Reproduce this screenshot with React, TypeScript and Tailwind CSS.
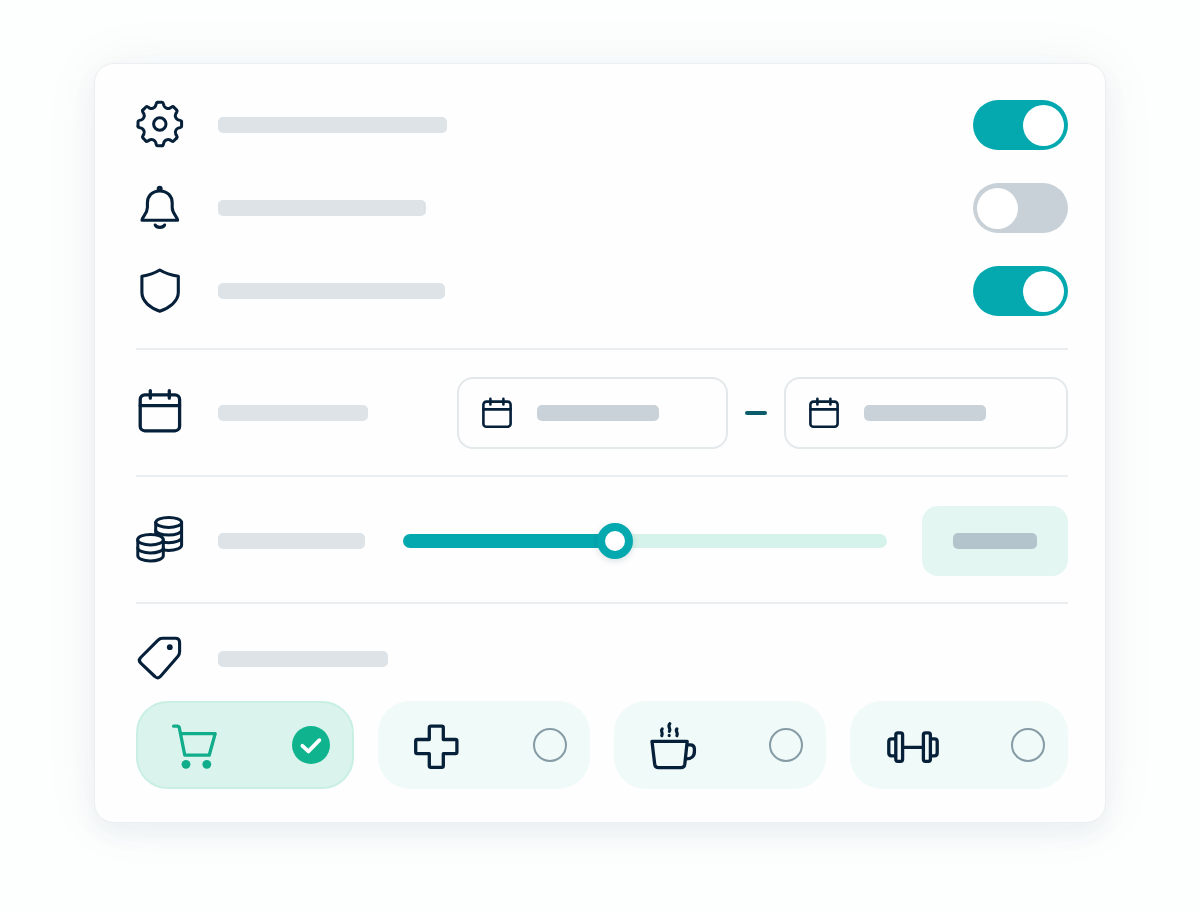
import { useState, type CSSProperties, type ReactNode } from "react";
import { clsx } from "clsx";

type IconProps = { color?: string; children: ReactNode; size?: number };

function Icon({ color = "text-[#06203a]", children, size = 48 }: IconProps) {
  return (
    <svg
      viewBox={`0 0 ${size} ${size}`}
      className={clsx("shrink-0 overflow-visible", size === 32 ? "size-8" : "size-12", color)}
      fill="none"
      stroke="currentColor"
      strokeWidth={3.3}
      strokeLinecap="round"
      strokeLinejoin="round"
      aria-hidden="true"
    >
      {children}
    </svg>
  );
}

const gearTurns = [0, 45, 90, 135, 180, 225, 270, 315];

function GearIcon() {
  return (
    <Icon>
      <g transform="translate(23.8 23)" strokeWidth={3}>
        {gearTurns.map((turn) => (
          <path
            key={turn}
            transform={`rotate(${turn})`}
            d="M-2.2-21.8H2.2Q3.3-21.8 3.6-20.4L4.1-18.4C4.8-16.2 7.9-14.9 10.1-15.9L11.9-17Q13.1-17.8 13.9-17"
          />
        ))}
        <circle r="6.2" />
      </g>
    </Icon>
  );
}

function BellIcon() {
  return (
    <Icon>
      <circle cx="23.7" cy="4.8" r="1.6" strokeWidth={2.8} />
      <path
        strokeWidth={3.1}
        d="M23.7 7C16 7 11.4 12.2 11.4 19V23.5C11.4 29.5 6.6 32 6 36.2H41.6C41 32 36.2 29.5 36.2 23.5V19C36.2 12.2 31.5 7 23.7 7Z"
      />
      <path strokeWidth={3.1} d="M19.2 41C20.8 44.1 27 44.1 28.6 41" />
    </Icon>
  );
}

function ShieldIcon() {
  return (
    <Icon>
      <path
        strokeWidth={3.1}
        d="M23.8 3C29 6.2 35 8.2 42.3 9.2V25.6C42.3 34.5 33 41 23.8 44.2C14.6 41 5.9 34.5 5.9 25.6V9.2C12.6 8.2 18.6 6.2 23.8 3Z"
      />
    </Icon>
  );
}

function CalendarIcon() {
  return (
    <Icon>
      <rect x="4.2" y="5.8" width="39.4" height="36" rx="4.6" />
      <path d="M4.2 16.6H43.6M14.3 1.6V9.2M33.3 1.6V9.2" />
    </Icon>
  );
}

function SmallCalendarIcon() {
  return (
    <Icon size={32}>
      <g strokeWidth={2.6}>
        <rect x="2.4" y="4.6" width="27.2" height="25.2" rx="3" />
        <path d="M2.4 12.4H29.6M9.4 1.8V7.4M22.4 1.8V7.4" />
      </g>
    </Icon>
  );
}

function CoinsIcon() {
  return (
    <Icon>
      <g strokeWidth={3} fill="#fefefe">
        <path d="M19.7 5.3V28.3C19.7 31.1 25.5 33.4 32.7 33.4S45.6 31.1 45.6 28.3V5.3" />
        <path d="M19.7 20.6C19.7 23.4 25.5 25.7 32.7 25.7S45.6 23.4 45.6 20.6" />
        <path d="M19.7 13C19.7 15.8 25.5 18.1 32.7 18.1S45.6 15.8 45.6 13" />
        <ellipse cx="32.7" cy="5.4" rx="12.9" ry="5" />
        <path d="M1.8 22.7V38.8C1.8 41.7 7.3 44 14.4 44S27.3 41.7 27.3 38.8V22.7" />
        <path d="M1.8 30.8C1.8 33.7 7.3 36 14.4 36S27.3 33.7 27.3 30.8" />
        <ellipse cx="14.5" cy="22.7" rx="12.8" ry="5.3" />
      </g>
    </Icon>
  );
}

function TagIcon() {
  return (
    <Icon>
      <path
        strokeWidth={3.1}
        d="M26.4 3.3H39.4C42.2 3.3 43.6 4.8 43.6 7.5V16.8C43.6 18.6 43.2 19.8 42 21.2L24.6 41.2C22.8 43.3 20.8 43.4 18.9 41.5L4.8 28.2C2.9 26.4 2.9 24.4 4.7 22.5L21.8 5.3C23.2 3.9 24.5 3.3 26.4 3.3Z"
      />
      <circle cx="33.8" cy="12.2" r="2.9" fill="currentColor" stroke="none" />
    </Icon>
  );
}

function CartIcon() {
  return (
    <Icon color="text-[#10ad8b]">
      <path d="M3.6 5.2H7.2C8.4 5.2 9 5.7 9.3 6.8L14.8 34.2H39.2L45.2 12.6H11" />
      <circle cx="16" cy="43.3" r="4.4" fill="currentColor" stroke="none" />
      <circle cx="36.8" cy="43.3" r="4.4" fill="currentColor" stroke="none" />
    </Icon>
  );
}

function CrossIcon() {
  return (
    <Icon>
      <path d="M18.9 5.1H29.7Q31.3 5.1 31.3 6.7V18.5H43.3Q44.9 18.5 44.9 20.1V31.1Q44.9 32.7 43.3 32.7H31.3V44.7Q31.3 46.3 29.7 46.3H18.9Q17.3 46.3 17.3 44.7V32.7H5.3Q3.7 32.7 3.7 31.1V20.1Q3.7 18.5 5.3 18.5H17.3V6.7Q17.3 5.1 18.9 5.1Z" />
    </Icon>
  );
}

function CupIcon() {
  return (
    <Icon>
      <path d="M4 20.4H39.2L36.8 43.2Q36.3 46.6 33 46.6H10.4Q7.2 46.6 6.7 43.2Z" />
      <path d="M39.6 23.8H42.2Q46.4 23.8 46.4 28V30.4C46.4 35.4 43 37.9 38.2 37.9" />
      <path
        strokeWidth={3.2}
        d="M14.2 7.9C12 10 15.4 11.8 13.8 14.6M21.8 2.8C19 6 23.4 7.6 21.4 10.4M21.2 14.4V14.6M28.9 7.9C26.8 10 30.6 11.8 28.9 14.6"
      />
    </Icon>
  );
}

function DumbbellIcon() {
  return (
    <Icon>
      <rect x="11.8" y="11.9" width="6.8" height="28.4" rx="2" />
      <rect x="39.4" y="11.9" width="7" height="28.4" rx="2" />
      <path d="M11.5 17.8H7.6Q4.8 17.8 4.8 20.6V32Q4.8 34.8 7.6 34.8H11.5M46.7 17.8H50.4Q53.2 17.8 53.2 20.6V32Q53.2 34.8 50.4 34.8H46.7M19 26.3H39" />
    </Icon>
  );
}

function LabelBar({ width }: { width: string }) {
  return <span className={clsx("block h-4 rounded-[5px] bg-[#dde3e7]", width)} />;
}

type ToggleRowProps = { id: string; name: string; icon: ReactNode; barWidth: string; initial: boolean };

function ToggleRow({ id, name, icon, barWidth, initial }: ToggleRowProps) {
  const [on, setOn] = useState(initial);
  return (
    <div className="flex h-[50px] items-center justify-between">
      <label htmlFor={id} className="flex items-center gap-[34px]">
        {icon}
        <LabelBar width={barWidth} />
      </label>
      <input
        id={id}
        type="checkbox"
        role="switch"
        aria-label={name}
        checked={on}
        onChange={(e) => setOn(e.target.checked)}
        className="flex h-[50px] w-[95px] shrink-0 cursor-pointer appearance-none items-center rounded-full bg-[#c8d1d7] px-1 before:size-[41px] before:rounded-full before:bg-white checked:justify-end checked:bg-[#04a9af]"
      />
    </div>
  );
}

function DateField({ name }: { name: string }) {
  return (
    <button
      type="button"
      aria-label={name}
      className="flex h-[72px] min-w-0 cursor-pointer items-center gap-6 rounded-2xl border-2 border-[#e3e8eb] pl-[22px]"
    >
      <SmallCalendarIcon />
      <span className="h-4 w-[122px] rounded-[5px] bg-[#c9d2d8]" />
    </button>
  );
}

const categories = [
  { id: "shopping", name: "Shopping", icon: <CartIcon /> },
  { id: "health", name: "Health", icon: <CrossIcon /> },
  { id: "cafe", name: "Café", icon: <CupIcon /> },
  { id: "fitness", name: "Fitness", icon: <DumbbellIcon /> },
];

function CategoryOptions() {
  const [selected, setSelected] = useState("shopping");
  return (
    <div role="radiogroup" aria-label="Category" className="mt-[18px] grid grid-cols-[218fr_212fr_212fr_218fr] gap-6">
      {categories.map(({ id, name, icon }) => {
        const checked = id === selected;
        return (
          <label
            key={id}
            htmlFor={id}
            className={clsx(
              "flex h-[88px] cursor-pointer items-center justify-between rounded-[32px] border-2 pl-8",
              checked ? "border-[#c9efe4] bg-[#daf4ed] pr-[22px]" : "border-transparent bg-[#f0faf8] pr-[21px]",
            )}
          >
            {icon}
            <span className="relative grid place-items-center">
              <input
                id={id}
                type="radio"
                name="category"
                aria-label={name}
                checked={checked}
                onChange={() => setSelected(id)}
                className="size-[34px] cursor-pointer appearance-none rounded-full border-2 border-[#859ba5] checked:size-[38px] checked:border-0 checked:bg-[#0fb48f]"
              />
              {checked && (
                <svg
                  viewBox="0 0 38 38"
                  className="pointer-events-none absolute inset-0 size-full"
                  fill="none"
                  stroke="white"
                  strokeWidth={3.8}
                  strokeLinecap="round"
                  strokeLinejoin="round"
                  aria-hidden="true"
                >
                  <path d="M10.4 19.8L16.4 25.4L27.4 14.2" />
                </svg>
              )}
            </span>
          </label>
        );
      })}
    </div>
  );
}

const THUMB = 36;

function AmountSlider() {
  const [value, setValue] = useState(433);
  const ratio = value / 1000;
  const fill = `calc(${THUMB / 2}px + (100% - ${THUMB}px) * ${ratio})`;
  return (
    <input
      id="amount"
      type="range"
      min={0}
      max={1000}
      aria-label="Amount"
      value={value}
      onChange={(e) => setValue(Number(e.target.value))}
      style={{ "--fill": fill } as CSSProperties}
      className="h-9 min-w-0 flex-1 cursor-pointer appearance-none bg-transparent [&::-webkit-slider-runnable-track]:h-[14px] [&::-webkit-slider-runnable-track]:rounded-full [&::-webkit-slider-runnable-track]:bg-[linear-gradient(to_right,#04a9af_var(--fill),#d5f3ea_var(--fill))] [&::-webkit-slider-thumb]:-mt-[11px] [&::-webkit-slider-thumb]:size-9 [&::-webkit-slider-thumb]:appearance-none [&::-webkit-slider-thumb]:rounded-full [&::-webkit-slider-thumb]:border-8 [&::-webkit-slider-thumb]:border-[#04a9af] [&::-webkit-slider-thumb]:bg-white [&::-webkit-slider-thumb]:shadow-[0_2px_6px_rgba(20,60,80,0.16)]"
    />
  );
}

export default function App() {
  return (
    <div className="min-h-screen bg-[#fdfefe] px-[94px] pt-[63px] pb-[89px] font-['Inter',sans-serif]">
      <main className="rounded-[20px] border border-[#eceff2] bg-[#fefefe] pt-9 pr-[37px] pb-[33px] pl-[41px] shadow-[0_10px_24px_rgba(40,70,100,0.06),0_0_60px_rgba(40,90,100,0.05)]">
        <section className="flex flex-col gap-[33px] pb-8">
          <ToggleRow id="general" name="General" icon={<GearIcon />} barWidth="w-[229px]" initial />
          <ToggleRow id="alerts" name="Notifications" icon={<BellIcon />} barWidth="w-[208px]" initial={false} />
          <ToggleRow id="security" name="Security" icon={<ShieldIcon />} barWidth="w-[227px]" initial />
        </section>

        <section className="flex items-center border-t-2 border-[#eaeef0] pt-[27px] pb-[26px]">
          <div className="flex w-[321px] shrink-0 items-center gap-[34px]">
            <CalendarIcon />
            <LabelBar width="w-[150px]" />
          </div>
          <div className="grid min-w-0 flex-1 grid-cols-[271fr_22px_284fr] items-center gap-[17px]">
            <DateField name="Start date" />
            <span className="h-1 rounded-full bg-[#0b5c6b]" />
            <DateField name="End date" />
          </div>
        </section>

        <section className="flex items-center border-t-2 border-[#eaeef0] pt-[29px] pb-[26px]">
          <label htmlFor="amount" className="flex w-[267px] shrink-0 items-center gap-[34px]">
            <CoinsIcon />
            <LabelBar width="w-[147px]" />
          </label>
          <AmountSlider />
          <output
            htmlFor="amount"
            className="ml-[35px] grid h-[70px] w-[146px] shrink-0 place-items-center rounded-2xl bg-[#e3f6f1]"
          >
            <span className="h-4 w-[84px] rounded-[5px] bg-[#b3c4cc]" />
          </output>
        </section>

        <section className="border-t-2 border-[#eaeef0] pt-[31px]">
          <div className="flex items-center gap-[34px]">
            <TagIcon />
            <LabelBar width="w-[170px]" />
          </div>
          <CategoryOptions />
        </section>
      </main>
    </div>
  );
}
